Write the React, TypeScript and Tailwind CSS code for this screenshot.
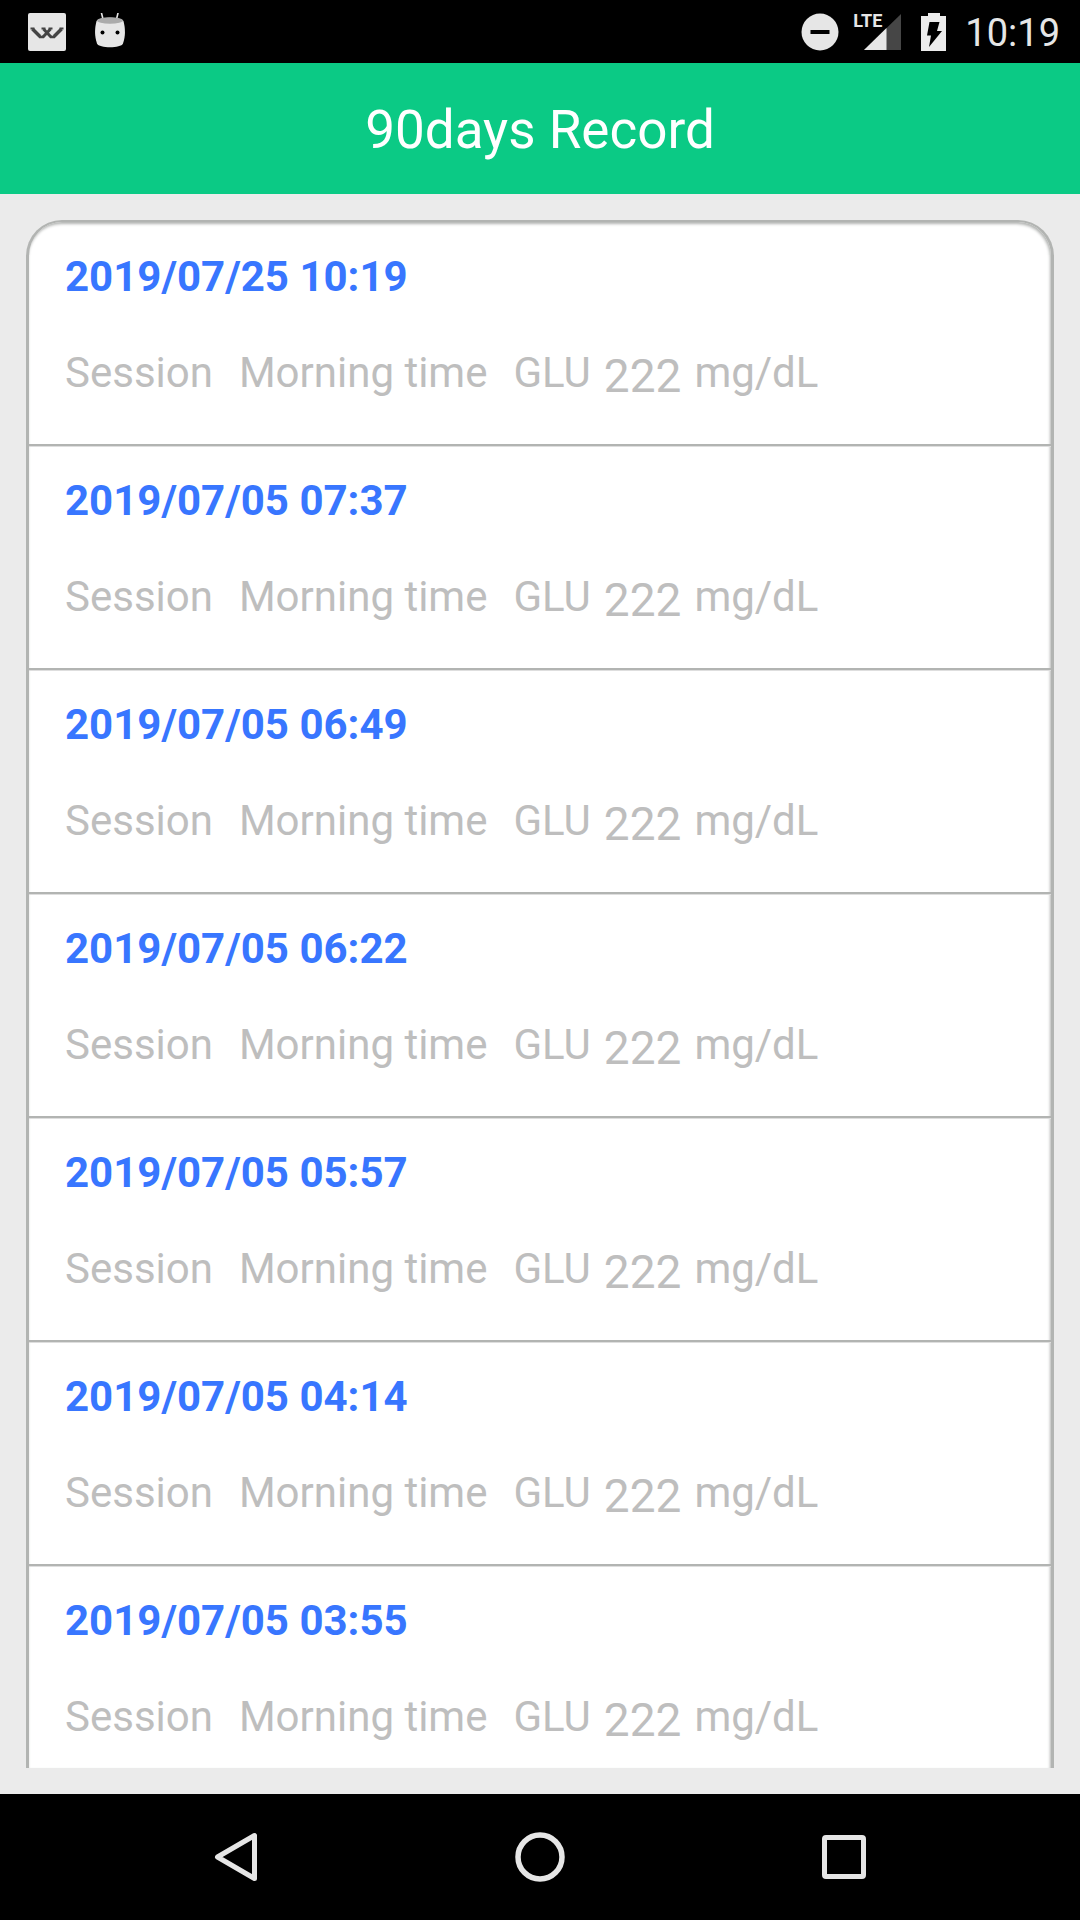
type GlucoseRecord = {
  time: string;
  session: string;
  value: number;
};

const records: GlucoseRecord[] = [
  { time: '2019/07/25 10:19', session: 'Morning time', value: 222 },
  { time: '2019/07/05 07:37', session: 'Morning time', value: 222 },
  { time: '2019/07/05 06:49', session: 'Morning time', value: 222 },
  { time: '2019/07/05 06:22', session: 'Morning time', value: 222 },
  { time: '2019/07/05 05:57', session: 'Morning time', value: 222 },
  { time: '2019/07/05 04:14', session: 'Morning time', value: 222 },
  { time: '2019/07/05 03:55', session: 'Morning time', value: 222 },
];

function AppBadgeIcon() {
  return (
    <svg width="38" height="38" viewBox="0 0 38 38" aria-hidden="true">
      <rect width="38" height="38" rx="2" fill="#e6e6e6" />
      <g fill="none" stroke="#444" strokeLinejoin="round">
        <path d="M4.500 16L12 23.500M33.500 16L26 23.500" strokeWidth="3.500" />
        <path d="M11 24h5M22 24h5" strokeWidth="2.500" />
        <path d="M15 24l7.500-8M23 24l-7.500-8" strokeWidth="3" />
        <path d="M2.500 15.500h4M13.500 15.500h4M20.500 15.500h4M31.500 15.500h4" strokeWidth="2" />
      </g>
    </svg>
  );
}

function AndroidHeadIcon() {
  return (
    <svg width="32" height="38" viewBox="0 0 32 38" aria-hidden="true">
      <path d="M7.500 0l1.700 7M24 0l-1.700 7" stroke="#e6e6e6" strokeWidth="1.600" strokeLinecap="round" />
      <path d="M2.500 8C6 3.500 26 3.500 29.500 8C31.500 16 31.500 23 29 30.500C27 35.500 5 35.500 3 30.500C.5 23 .5 16 2.500 8z" fill="#e6e6e6" />
      <ellipse cx="16" cy="7.500" rx="13" ry="3.300" fill="#ababab" />
      <circle cx="8.500" cy="19.500" r="2" fill="#000" />
      <circle cx="23.500" cy="19.500" r="2" fill="#000" />
    </svg>
  );
}

function DoNotDisturbIcon() {
  return (
    <svg width="38" height="38" viewBox="0 0 38 38" aria-hidden="true">
      <circle cx="19" cy="19" r="18.500" fill="#e6e6e6" />
      <path d="M9.500 19h19" stroke="#000" strokeWidth="4" />
    </svg>
  );
}

function SignalIcon() {
  return (
    <div className="relative">
      <svg width="46" height="38" viewBox="0 0 46 38" aria-hidden="true">
        <path d="M46 1v36H9z" fill="#464646" />
        <path d="M31.500 15v22H9z" fill="#e6e6e6" />
      </svg>
      <span className="absolute -top-0.5 -left-0.5 text-[18px] leading-5 font-bold text-[#e6e6e6]">LTE</span>
    </div>
  );
}

function BatteryIcon() {
  return (
    <svg width="26" height="38" viewBox="0 0 26 38" aria-hidden="true">
      <path d="M7 0h12v3h6v35H0V3h7z" fill="#ececec" />
      <path d="M8.500 9h10l-2.500 9H21L8 34l2-11.500H6z" fill="#000" />
    </svg>
  );
}

function StatusBar() {
  return (
    <div className="flex h-[63px] shrink-0 items-center justify-between bg-black pr-5 pl-7">
      <div className="flex items-center gap-7">
        <AppBadgeIcon />
        <AndroidHeadIcon />
      </div>
      <div className="flex items-center">
        <div className="flex items-center gap-4">
          <DoNotDisturbIcon />
          <SignalIcon />
        </div>
        <div className="ml-5 flex items-center gap-[18px]">
          <BatteryIcon />
          <time className="pt-0.5 text-[38px] leading-none text-[#e6e6e6]">10:19</time>
        </div>
      </div>
    </div>
  );
}

function RecordRow({ record }: { record: GlucoseRecord }) {
  return (
    <li className="h-56 shrink-0 border-b-2 border-[#b2b4b2] px-9 pt-[30px] shadow-[0_1px_0_#dedede]">
      <h2 className="text-[42px] leading-[50px] font-bold text-[#3876ff]">{record.time}</h2>
      <p className="mt-[46px] flex items-start text-[42px] leading-[50px] whitespace-nowrap text-[#bebebe]">
        <span>Session</span>
        <span className="ml-[26px]">{record.session}</span>
        <span className="ml-[26px]">GLU</span>
        <span className="ml-[13px] text-[46px] leading-[56px]">{record.value}</span>
        <span className="ml-[13px]">mg/dL</span>
      </p>
    </li>
  );
}

function NavigationBar() {
  return (
    <nav className="grid h-[126px] shrink-0 grid-cols-3 items-center justify-items-center bg-black px-[84px]">
      <button type="button" aria-label="Back">
        <svg width="50" height="50" viewBox="0 0 50 50" fill="none" stroke="#e6e6e6" strokeWidth="5">
          <path d="M43.500 3.500v43L6.500 25z" strokeLinejoin="round" />
        </svg>
      </button>
      <button type="button" aria-label="Home">
        <svg width="50" height="50" viewBox="0 0 50 50" fill="none" stroke="#e6e6e6" strokeWidth="5.500">
          <circle cx="25" cy="25" r="22" />
        </svg>
      </button>
      <button type="button" aria-label="Recent apps">
        <svg width="50" height="50" viewBox="0 0 50 50" fill="none" stroke="#e6e6e6" strokeWidth="5">
          <rect x="5.500" y="5.500" width="39" height="39" rx="1.500" />
        </svg>
      </button>
    </nav>
  );
}

export default function App() {
  return (
    <div className="flex h-screen flex-col bg-[#ebebeb] font-['Roboto',sans-serif]">
      <StatusBar />
      <header className="flex h-[131px] shrink-0 items-center justify-center bg-[#0bca85] pt-1">
        <h1 className="text-[53px] leading-none text-white">90days Record</h1>
      </header>
      <main className="flex min-h-0 flex-1 flex-col p-[26px]">
        <ul className="flex min-h-0 flex-1 flex-col overflow-y-auto rounded-t-[36px] border-x-[3px] border-t-2 border-[#b2b4b2] bg-white shadow-[inset_-1px_2px_3px_#b2b4b2] [scrollbar-width:none]">
          {records.map((record) => (
            <RecordRow key={record.time} record={record} />
          ))}
        </ul>
      </main>
      <NavigationBar />
    </div>
  );
}
